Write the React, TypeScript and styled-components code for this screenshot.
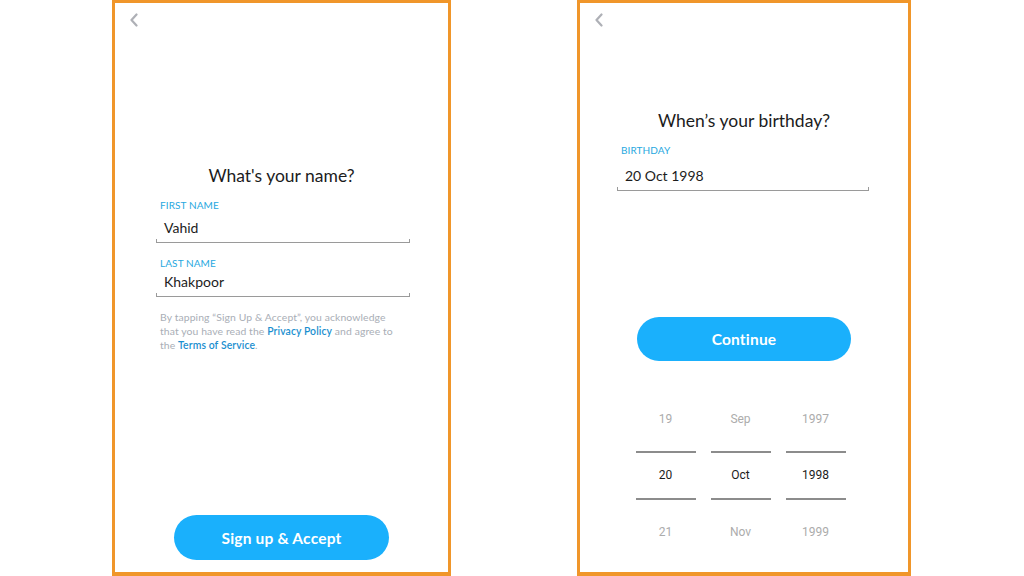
import styled, { createGlobalStyle } from "styled-components";

const GlobalStyle = createGlobalStyle`
    html, body {
        margin: 0;
        padding: 0;
        background: #ffffff;
    }
    body {
        font-family: Lato, "Noto Sans", sans-serif;
        color: #1f1f1f;
    }
`

const StyledPage = styled.div`
    width: 1024px;
    height: 576px;
    display: flex;
    gap: 126px;
    padding-left: 112px;
    box-sizing: border-box;
`
const StyledFrame = styled.div<{ $width: number }>`
    width: ${(p) => p.$width}px;
    height: 576px;
    box-sizing: border-box;
    border: 3.5px solid #f0962a;
    border-bottom-width: 4px;
    display: flex;
    flex-direction: column;
    position: relative;
    background: #fff;
`
const StyledBack = styled.button`
    position: absolute;
    top: 10px;
    left: 13px;
    border: none;
    background: none;
    padding: 0;
    width: 12px;
    height: 14px;
    cursor: pointer;
`
const StyledTitle = styled.h2<{ $top: number }>`
    margin: ${(p) => p.$top}px 0 0;
    text-align: center;
    font-size: 17.5px;
    line-height: 20px;
    font-weight: 400;
    color: #1c1c1c;
`
const StyledForm = styled.div<{ $left: number; $width: number }>`
    margin-left: ${(p) => p.$left}px;
    width: ${(p) => p.$width}px;
    display: flex;
    flex-direction: column;
`
const StyledField = styled.div<{ $top: number }>`
    margin-top: ${(p) => p.$top}px;
    display: flex;
    flex-direction: column;
`
const StyledLabel = styled.label`
    padding-left: 4px;
    font-size: 10px;
    line-height: 12px;
    color: #27a8e0;
    letter-spacing: 0.1px;
`
const StyledValue = styled.div<{ $gap: number }>`
    margin-top: ${(p) => p.$gap}px;
    padding: 0 0 4px 8px;
    font-size: 14px;
    line-height: 20px;
    color: #1c1c1c;
    border-bottom: 1px solid #9a9a9a;
    position: relative;
    &::before, &::after {
        content: "";
        position: absolute;
        bottom: 0;
        width: 1px;
        height: 3px;
        background: #9a9a9a;
    }
    &::before { left: 0; }
    &::after { right: 0; }
`
const StyledNote = styled.p`
    margin: 13px 0 0;
    padding-left: 4px;
    font-size: 10.4px;
    line-height: 14px;
    color: #a9aeb6;
    letter-spacing: 0.1px;
`
const StyledLink = styled.a`
    color: #1b8fcf;
    font-weight: 600;
    text-decoration: none;
`
const StyledButton = styled.button<{ $width: number; $height: number }>`
    align-self: center;
    width: ${(p) => p.$width}px;
    height: ${(p) => p.$height}px;
    border: none;
    border-radius: 999px;
    background: #1ab0fc;
    color: #fff;
    font-family: Lato, "Noto Sans", sans-serif;
    font-size: 15.5px;
    font-weight: 700;
    letter-spacing: 0.2px;
    cursor: pointer;
`
const StyledBottomButton = styled(StyledButton)`
    margin-top: auto;
    margin-bottom: 12px;
`
const StyledContinue = styled(StyledButton)`
    margin-top: 126px;
`
const StyledPicker = styled.div`
    margin-top: 30px;
    align-self: center;
    display: flex;
    gap: 15px;
    padding-right: 7px;
`
const StyledColumn = styled.div`
    width: 60px;
    display: flex;
    flex-direction: column;
    font-family: Roboto, "Noto Sans", sans-serif;
    font-size: 12px;
    text-align: center;
`
const StyledCell = styled.div<{ $pos: "top" | "mid" | "bottom" }>`
    height: ${(p) => (p.$pos === "mid" ? "49px" : "60px")};
    line-height: ${(p) => (p.$pos === "mid" ? "45px" : "56px")};
    padding-top: ${(p) => (p.$pos === "bottom" ? "4px" : "0")};
    box-sizing: border-box;
    color: ${(p) => (p.$pos === "mid" ? "#1c1c1c" : "#acacac")};
    border-top: ${(p) => (p.$pos === "mid" ? "2px solid #8c8c8c" : "none")};
    border-bottom: ${(p) => (p.$pos === "mid" ? "2px solid #8c8c8c" : "none")};
`

function Chevron() {
    return (
        <svg width="10" height="14" viewBox="0 0 10 14">
            <path d="M7.5 1.5 L2.5 7 L7.5 12.5" fill="none" stroke="#aeb0b6" strokeWidth="2.2" strokeLinecap="round" strokeLinejoin="round" />
        </svg>
    )
}

const picker = [
    ["19", "20", "21"],
    ["Sep", "Oct", "Nov"],
    ["1997", "1998", "1999"],
]

export default function App() {
    return (
        <>
            <GlobalStyle />
            <StyledPage>
                <StyledFrame $width={339}>
                    <StyledBack aria-label="Back"><Chevron /></StyledBack>
                    <StyledTitle $top={163}>What's your name?</StyledTitle>
                    <StyledForm $left={41} $width={254}>
                        <StyledField $top={13}>
                            <StyledLabel>FIRST NAME</StyledLabel>
                            <StyledValue $gap={7}>Vahid</StyledValue>
                        </StyledField>
                        <StyledField $top={14}>
                            <StyledLabel>LAST NAME</StyledLabel>
                            <StyledValue $gap={3}>Khakpoor</StyledValue>
                        </StyledField>
                        <StyledNote>
                            By tapping “Sign Up &amp; Accept”, you acknowledge<br />
                            that you have read the <StyledLink href="#">Privacy Policy</StyledLink> and agree to<br />
                            the <StyledLink href="#">Terms of Service</StyledLink>.
                        </StyledNote>
                    </StyledForm>
                    <StyledBottomButton $width={215} $height={45}>Sign up &amp; Accept</StyledBottomButton>
                </StyledFrame>

                <StyledFrame $width={334}>
                    <StyledBack aria-label="Back"><Chevron /></StyledBack>
                    <StyledTitle $top={108}>When’s your birthday?</StyledTitle>
                    <StyledForm $left={37} $width={252}>
                        <StyledField $top={13}>
                            <StyledLabel>BIRTHDAY</StyledLabel>
                            <StyledValue $gap={10}>20 Oct 1998</StyledValue>
                        </StyledField>
                    </StyledForm>
                    <StyledContinue $width={214} $height={44}>Continue</StyledContinue>
                    <StyledPicker>
                        {picker.map((col) => (
                            <StyledColumn key={col[1]}>
                                <StyledCell $pos="top">{col[0]}</StyledCell>
                                <StyledCell $pos="mid">{col[1]}</StyledCell>
                                <StyledCell $pos="bottom">{col[2]}</StyledCell>
                            </StyledColumn>
                        ))}
                    </StyledPicker>
                </StyledFrame>
            </StyledPage>
        </>
    )
}
